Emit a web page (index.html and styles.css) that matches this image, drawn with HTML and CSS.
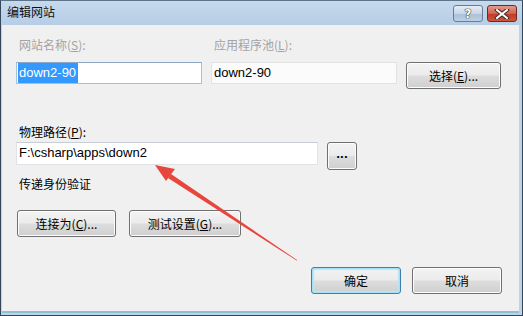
FILE: index.html
```html
<!DOCTYPE html>
<html lang="zh">
<head>
<meta charset="utf-8">
<link rel="stylesheet" href="styles.css">
</head>
<body>
<div class="window">
  <div class="titlebar">
    <span class="title">编辑网站</span>
    <div class="caption-btns">
      <div class="cap help"><span>?</span></div>
      <div class="cap close">
        <svg width="16" height="10" viewBox="0 0 16 10"><path d="M3 1 L13 9 M13 1 L3 9" stroke="#3a2a2a" stroke-width="4" stroke-linecap="square"/><path d="M3 1 L13 9 M13 1 L3 9" stroke="#ffffff" stroke-width="2" stroke-linecap="square"/></svg>
      </div>
    </div>
  </div>
  <div class="content">
    <div class="row1">
      <div class="field">
        <div class="label disabled">网站名称(<u>S</u>):</div>
        <div class="input focused"><span class="sel">down2-90</span></div>
      </div>
      <div class="field">
        <div class="label disabled">应用程序池(<u>L</u>):</div>
        <div class="input light">down2-90</div>
      </div>
      <div class="btn btn-select">选择(<u>E</u>)...</div>
    </div>
    <div class="label path-label">物理路径(<u>P</u>):</div>
    <div class="row2">
      <div class="input path">F:\csharp\apps\down2</div>
      <div class="btn btn-dots">...</div>
    </div>
    <div class="label auth-label">传递身份验证</div>
    <div class="row3">
      <div class="btn btn-conn">连接为(<u>C</u>)...</div>
      <div class="btn btn-test">测试设置(<u>G</u>)...</div>
    </div>
    <div class="row4">
      <div class="btn btn-ok default">确定</div>
      <div class="btn btn-cancel">取消</div>
    </div>
  </div>
  <svg class="arrow" width="523" height="316" viewBox="0 0 523 316">
    <polygon points="297,260 171,174 168,178 297,260.8" fill="#e8453c"/>
    <polygon points="155,165 175,169 166,181" fill="#e8453c"/>
  </svg>
</div>
</body>
</html>
```
FILE: styles.css
```css
* { box-sizing: border-box; }
html, body { margin: 0; padding: 0; }
body {
  width: 523px; height: 316px; overflow: hidden;
  font-family: "Noto Sans CJK SC", "Open Sans", sans-serif;
  font-size: 12px; color: #000;
}
.window {
  position: relative;
  width: 523px; height: 316px;
  background: #bcd3ea;
  border-left: 1px solid #34465a;
  border-right: 1px solid #34465a;
  border-bottom: 1px solid #34465a;
  border-top: 1px solid #5e7389;
  display: flex; flex-direction: column;
}
.titlebar {
  height: 24px;
  display: flex; align-items: center; justify-content: space-between;
  padding: 0 5px 0 6px;
  background: linear-gradient(#c6d9ed, #b6cde6);
}
.title { font-size: 12px; line-height: 14px; margin-top: -2px; color: #111; }
.caption-btns { display: flex; gap: 4px; align-self: flex-start; margin-top: 4px; }
.cap {
  width: 30px; height: 17px; border-radius: 3px;
  display: flex; align-items: center; justify-content: center;
}
.help {
  border: 1px solid #6b7d92;
  background: linear-gradient(#e4ecf5 0%, #c8d7e8 50%, #aac0d8 51%, #bcd0e4 100%);
}
.help span { font-family: "DejaVu Sans", sans-serif; font-weight: bold; font-size: 12px; color: #fff; text-shadow: 0 0 1px #334, 0 0 1px #334, 0 0 1px #334; line-height: 12px; }
.close {
  border: 1px solid #6e2a22;
  background: linear-gradient(#e59a8a 0%, #d0634e 50%, #bf3b24 51%, #d0553a 100%);
}
.content {
  flex: 1;
  margin: 0 3px 2px 1px;
  background: #f0f0f0;
  border-bottom: 2px solid #8ec0d8;
  padding: 0 0 0 14px;
  display: flex; flex-direction: column;
}
.label { line-height: 16px; height: 16px; }
.label u { text-decoration: underline; }
.disabled { color: #a3a3a3; }
.row1 { display: flex; gap: 9px; margin-top: 12px; align-items: flex-end; }
.field { display: flex; flex-direction: column; gap: 9px; width: 186px; }
.field .label { padding-left: 3px; }
.input {
  height: 22px; background: #fff;
  border: 1px solid #dfe3e8; border-top-color: #c9ced6;
  font-family: "Liberation Sans", "Arial", sans-serif;
  font-size: 13px; line-height: 20px; padding-left: 2px;
  white-space: nowrap; overflow: hidden;
}
.input.focused { border-color: #a8c0d8; border-top-color: #8aa7c6; padding-left: 1px; }
.sel { background: #3399ff; color: #fff; display: inline-block; line-height: 20px; padding: 0 2px 0 1px; }
.input.light { background: #fbfbfb; border-color: #e2e2e2; }
.btn {
  height: 27px; border: 1px solid #707070; border-radius: 3px;
  background: linear-gradient(#f3f3f3 0%, #ebebeb 48%, #dddddd 52%, #cfcfcf 100%);
  display: flex; align-items: center; justify-content: center;
  font-size: 12px; line-height: 14px;
  box-shadow: inset 0 0 0 1px #fcfcfc;
}
.btn u { text-decoration: underline; }
.btn-select { width: 95px; margin-bottom: -5px; }
.path-label { margin-top: 40px; padding-left: 3px; }
.row2 { display: flex; gap: 9px; margin-top: 2px; align-items: flex-start; }
.input.path { width: 302px; height: 23px; }
.btn-dots { width: 30px; height: 28px; font-family: "DejaVu Sans", sans-serif; font-weight: bold; font-size: 10px; padding-bottom: 2px; }
.auth-label { margin-top: 6px; padding-left: 3px; }
.row3 { display: flex; gap: 13px; margin-top: 18px; margin-left: 1px; }
.btn-conn { width: 99px; }
.btn-test { width: 112px; }
.row4 { display: flex; gap: 11px; margin-top: 30px; margin-left: 295px; }
.btn-ok, .btn-cancel { width: 90px; }
.btn.default {
  border-color: #3c7fb1;
  box-shadow: inset 0 0 0 1px #48d8fb33, inset 0 0 1px 2px #b9e4f5;
}
.arrow { position: absolute; left: -1px; top: -1px; pointer-events: none; }
```
